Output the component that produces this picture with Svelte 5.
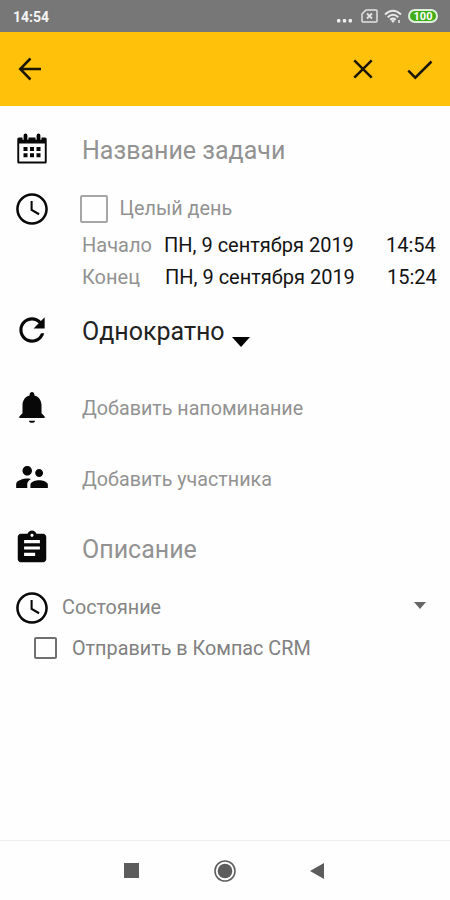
<script>
  const dates = [
    { label: 'Начало', date: 'ПН, 9 сентября 2019', time: '14:54' },
    { label: 'Конец', date: 'ПН, 9 сентября 2019', time: '15:24' }
  ];
</script>

{#snippet clock()}
  <svg class="icon" viewBox="0 0 24 24"><path d="M11.99 2C6.47 2 2 6.48 2 12s4.47 10 9.99 10C17.52 22 22 17.52 22 12S17.52 2 11.99 2zM12 20.4c-4.64 0-8.4-3.76-8.4-8.4s3.76-8.4 8.4-8.4 8.4 3.76 8.4 8.4-3.76 8.4-8.4 8.4zM12.4 7h-1.3v5.9l5 3 .7-1.2-4.4-2.6z" /></svg>
{/snippet}

<div class="screen">
  <header class="status">
    <span class="clock-text">14:54</span>
    <div class="indicators">
      <svg width="17" height="6" viewBox="0 0 17 6" fill="#eee"><rect x="1" y="2" width="3.4" height="3.4" rx="1" /><rect x="6.8" y="2" width="3.4" height="3.4" rx="1" /><rect x="12.6" y="2" width="3.4" height="3.4" rx="1" /></svg>
      <svg class="sim" width="17" height="14" viewBox="0 0 17 14" fill="none" stroke="#e4e4e4" stroke-width="1.5"><path d="M5 1h10q1 0 1 1v10q0 1-1 1H2q-1 0-1-1V5z" /><path d="M6 4.5l5 5M11 4.5l-5 5" stroke-width="1.8" /></svg>
      <svg class="wifi" width="19" height="15" viewBox="0 0 19 15" fill="none" stroke="#e8e8e8" stroke-width="2"><path d="M1 5.4Q9 -1.8 17 5.4M3.7 8.2Q9 3.4 14.3 8.2M6.2 10.8Q9 8.4 11.8 10.8" /><path d="M9 14l-2-2.3q2-1.4 4 0z" fill="#e8e8e8" stroke="none" /><path d="M15 11v3" stroke-width="1.5" /></svg>
      <span class="battery">100</span>
    </div>
  </header>

  <nav class="appbar">
    <svg class="back" width="24" height="24" viewBox="0 0 24 24"><path d="M12.5 1.5L2.2 12l10.3 10.5M2.6 12H23" /></svg>
    <svg class="close" width="20" height="20" viewBox="0 0 20 20"><path d="M1.3 1.3l17.4 17.4M18.7 1.3L1.3 18.7" /></svg>
    <svg class="done" width="26" height="20" viewBox="0 0 26 20"><path d="M1.3 10.7l7 7L24.5 1.5" /></svg>
  </nav>

  <main>
    <div class="row title">
      <svg class="icon" viewBox="0 0 38 38"><path d="M4.3 9q0-1.500 1.500-1.500h26.400q1.500 0 1.500 1.500v23q0 1.500-1.500 1.500H5.800q-1.500 0-1.500-1.500zM6.200 13.500v17.900h25.600V13.500z" fill-rule="evenodd" /><path d="M12.500 4.500v5M25.500 4.500v5" stroke="#fefefe" stroke-width="6" /><path d="M12.500 5.500v3M25.500 5.500v3" stroke="#000" stroke-width="3.800" stroke-linecap="round" /><path d="M10.500 17h4v4h-4zm6.500 0h4v4h-4zm6.500 0h4v4h-4zm-13 6.300h4v4h-4zm6.500 0h4v4h-4zm6.500 0h4v4h-4z" /></svg>
      <span class="t-title">Название задачи</span>
    </div>
    <div class="row allday">
      {@render clock()}
      <span class="box big"></span><span class="t-allday">Целый день</span>
    </div>
    <div class="dates">
      {#each dates as d, i}
        <div class="date-row" class:second={i === 1}>
          <span class="label">{d.label}</span><span class="date">{d.date}</span><span class="time">{d.time}</span>
        </div>
      {/each}
    </div>
    <div class="row repeat">
      <svg class="icon" viewBox="0 0 24 24"><path d="M17.65 6.35C16.2 4.9 14.21 4 12 4c-4.420 0-7.990 3.580-7.990 8s3.570 8 7.990 8c3.730 0 6.840-2.550 7.730-6h-2.080c-.82 2.330-3.040 4-5.650 4-3.310 0-6-2.690-6-6s2.690-6 6-6c1.660 0 3.140.69 4.220 1.780L13 11h7V4l-2.350 2.350z" /></svg>
      <span class="t-repeat">Однократно</span>
      <svg class="caret" width="18" height="10" viewBox="0 0 18 10"><path d="M0 0h18L9 10z" /></svg>
    </div>
    <div class="row reminder">
      <svg class="icon" viewBox="0 0 24 24"><path d="M12 22c1.100 0 2-.5 2-1.300h-4c0 .8.890 1.300 2 1.300zm6-6v-5c0-3.070-1.640-5.640-4.500-6.320V4c0-.83-.67-1.500-1.500-1.500s-1.500.67-1.500 1.500v.68C7.630 5.360 6 7.920 6 11v5l-2 2v1h16v-1l-2-2z" /></svg>
      <span class="t-reminder">Добавить напоминание</span>
    </div>
    <div class="row member">
      <svg class="icon" viewBox="0 0 24 24"><path d="M16.500 12c1.380 0 2.490-1.120 2.490-2.500S17.880 7 16.500 7C15.120 7 14 8.120 14 9.500s1.120 2.500 2.500 2.500zM9 11c1.660 0 2.990-1.340 2.990-3S10.660 5 9 5C7.340 5 6 6.340 6 8s1.340 3 3 3zm7.500 3c-1.830 0-5.500.92-5.500 2.750V19h11v-2.250c0-1.830-3.670-2.750-5.500-2.750zM9 13c-2.330 0-7 1.170-7 3.500V19h7v-2.250c0-.85.33-2.340 2.370-3.470C10.500 13.100 9.660 13 9 13z" /></svg>
      <span class="t-member">Добавить участника</span>
    </div>
    <div class="row description">
      <svg class="icon" viewBox="0 0 24 24"><path d="M19 3h-4.180C14.400 1.840 13.300 1 12 1c-1.300 0-2.400.84-2.820 2H5c-1.100 0-2 .9-2 2v14c0 1.100.9 2 2 2h14c1.100 0 2-.9 2-2V5c0-1.100-.9-2-2-2zm-7 0c.55 0 1 .45 1 1s-.45 1-1 1-1-.45-1-1 .45-1 1-1zm2 14H7v-2h7v2zm3-4H7v-2h10v2zm0-4H7V7h10v2z" /></svg>
      <span class="t-description">Описание</span>
    </div>
    <div class="row state">
      {@render clock()}
      <span class="t-state">Состояние</span>
      <svg class="drop" width="12" height="7" viewBox="0 0 12 7"><path d="M0 0h12L6 7z" fill="#666" /></svg>
    </div>
    <div class="row crm">
      <span class="box small"></span><span class="t-crm">Отправить в Компас CRM</span>
    </div>
  </main>

  <footer>
    <svg width="15" height="15" viewBox="0 0 15 15"><rect width="15" height="15" fill="#5c5c5c" /></svg>
    <svg width="22" height="22" viewBox="0 0 22 22"><circle cx="11" cy="11" r="10" fill="none" stroke="#606060" stroke-width="1.600" /><circle cx="11" cy="11" r="7.300" fill="#5c5c5c" /></svg>
    <svg width="14" height="16" viewBox="0 0 14 16"><path d="M14 0v16L0 8z" fill="#5c5c5c" /></svg>
  </footer>
</div>

<style>
  :global(body) { margin: 0; background: #fff; }
  .screen { width: 450px; height: 900px; display: flex; flex-direction: column; background: #fefefe; font-family: Roboto, sans-serif; color: #141414; overflow: hidden; }
  svg { display: block; flex: none; }
  span { white-space: nowrap; }

  .status { height: 32px; flex: none; display: flex; justify-content: space-between; align-items: center; padding: 0 12px 0 13px; box-sizing: border-box; background: #777; }
  .clock-text { color: #f4f4f4; font-size: 14px; font-weight: 700; line-height: 16px; padding-top: 1px; }
  .indicators { display: flex; align-items: center; }
  .indicators > svg:first-child { margin: 7px 8px 0 0; }
  .sim { margin-right: 6px; }
  .wifi { margin-right: 5px; }
  .battery { width: 30px; height: 14px; box-sizing: border-box; border: 2px solid #dff0dc; border-radius: 7px; background: #3fae18; color: #fff; font-size: 11px; font-weight: 700; line-height: 11px; text-align: center; }

  .appbar { height: 74px; flex: none; display: flex; align-items: center; padding: 0 17px 0 18px; background: #ffc10a; }
  .appbar path { fill: none; stroke: #1c1600; stroke-width: 2.500; }
  .close { margin-left: auto; margin-right: 34px; }
  .done { margin-top: 1px; }

  main { flex: 1; padding-top: 1px; }
  .row { display: flex; align-items: center; color: #929292; }
  .icon { width: 38px; height: 38px; margin-left: 13px; fill: #080808; }
  .icon + span { margin-left: 31px; }

  .title { height: 86px; }
  .title .icon { margin-bottom: 2px; }
  .allday { height: 32px; }
  .repeat { height: 75px; }
  .repeat .icon { margin-bottom: 2px; }
  .reminder { height: 79px; }
  .reminder .icon { margin-bottom: 1px; }
  .member { height: 64px; }
  .member .icon { margin-bottom: 5px; }
  .description { height: 77px; }
  .description .icon { margin-bottom: 3px; }
  .state { height: 40px; }
  .crm { height: 39px; }

  .box { box-sizing: border-box; flex: none; border-radius: 2px; }
  .icon + .box.big { width: 28px; height: 28px; margin-left: 29px; border: 2px solid #a6a6a6; }
  .box.small { width: 23px; height: 22px; margin-left: 34px; border: 2px solid #707070; }

  .t-title { font-size: 25px; }
  .t-allday { font-size: 19.8px; margin: 0 0 2px 11.5px; }
  .t-repeat { font-size: 25px; color: #222; padding-top: 1px; }
  .caret { margin: 22px 0 0 7px; }
  .t-reminder { font-size: 19.7px; padding-top: 2px; }
  .t-member { font-size: 19.7px; }
  .t-description { font-size: 25px; }
  .icon + .t-state { font-size: 19.8px; margin: 0 0 2px 11px; color: #858585; }
  .drop { margin: 0 24px 5px auto; }
  .t-crm { font-size: 19.8px; margin-left: 15px; padding-top: 1px; color: #808080; }

  .dates { padding: 4px 0 0 82px; }
  .date-row { height: 32px; display: flex; align-items: center; font-size: 20px; }
  .label { width: 82px; color: #929292; }
  .date { width: 222px; }
  .second .label { width: 83px; }

  footer { height: 60px; flex: none; box-sizing: border-box; border-top: 1px solid #eee; display: flex; align-items: center; justify-content: space-between; padding: 0 126px 0 124px; }
</style>
